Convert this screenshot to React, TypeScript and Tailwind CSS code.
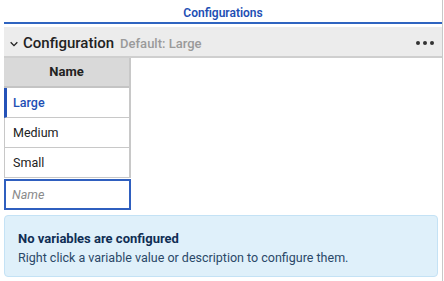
export default function App() {
  return (
    <div
      className="w-[444px] h-[281px] bg-white overflow-hidden relative text-[#222]"
      style={{ fontFamily: 'Roboto, "Noto Sans", sans-serif' }}
    >
      <div className="absolute right-[1px] top-0 h-full w-px bg-[#c8c8c8]" />
      <div className="pl-1 pr-[2px]">
        <div className="h-[24px] flex items-end justify-center border-b-2 border-[#2f64c0]">
          <span className="text-[12px] font-semibold text-[#1e4fb4] leading-none mb-[3px]">Configurations</span>
        </div>
        <div className="mt-[3px] h-[31px] bg-[#ececec] border-b-2 border-[#cfcfcf] flex items-center pl-[5px] pr-[6px] pt-[3px]">
          <svg width="10" height="10" viewBox="0 0 12 12" className="mr-[4px] mt-[2px]">
            <path d="M2 4 L6 8 L10 4" fill="none" stroke="#222" strokeWidth="1.6" />
          </svg>
          <span className="text-[15px] font-medium leading-none">Configuration</span>
          <span className="ml-[6px] text-[13px] font-medium text-[#9a9a9a] leading-none">Default: Large</span>
          <div className="ml-auto flex gap-[3px] mr-[2px]">
            <span className="w-[4px] h-[4px] rounded-full bg-[#333]" />
            <span className="w-[4px] h-[4px] rounded-full bg-[#333]" />
            <span className="w-[4px] h-[4px] rounded-full bg-[#333]" />
          </div>
        </div>
        <div className="w-[127px] border-r-2 border-[#c8c8c8]">
          <div className="h-[30px] bg-[#d9d9d9] border-b-2 border-[#c4c4c4] flex items-center justify-center text-[13px] font-bold">
            Name
          </div>
          <div className="h-[30px] border-b border-[#c8c8c8] flex items-center border-l-[3px] border-l-[#2452b8] pl-[6px] pt-[1px] text-[12.5px] font-medium text-[#1e4fb4]">
            Large
          </div>
          <div className="h-[30px] border-b border-[#c8c8c8] border-l border-l-[#c8c8c8] flex items-center pl-[8px] pt-[1px] text-[12.5px]">
            Medium
          </div>
          <div className="h-[30px] border-b border-[#c8c8c8] border-l border-l-[#c8c8c8] flex items-center pl-[8px] pt-[1px] text-[12.5px]">
            Small
          </div>
        </div>
        <div className="w-[127px] h-[31px] mt-[1px] border-2 border-[#2f5fbf] flex items-center pl-[6px] pt-[1px] text-[12.5px] italic text-[#8a8a8a]">
          Name
        </div>
        <div className="mt-[5px] mr-[4px] h-[62px] bg-[#dff0fa] border border-[#c4e2f5] rounded-[4px] pl-[13px] pt-[14px]">
          <div className="text-[13px] font-bold text-[#0f2e54] leading-[17px]">No variables are configured</div>
          <div className="text-[12.5px] text-[#2a4868] leading-[17px] mt-[2px]">
            Right click a variable value or description to configure them.
          </div>
        </div>
      </div>
    </div>
  );
}
